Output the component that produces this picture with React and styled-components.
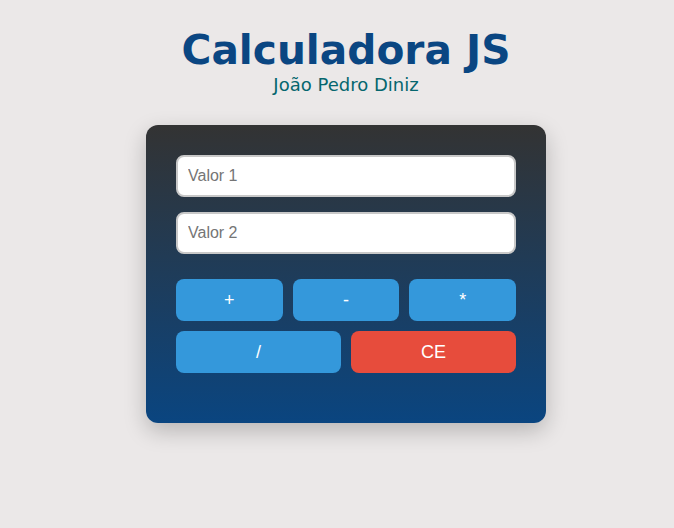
import styled, { createGlobalStyle } from 'styled-components';

const GlobalStyle = createGlobalStyle`
  html,
  body {
    margin: 0;
    min-height: 100%;
    background: #ebe8e8;
    font-family: 'DejaVu Sans', Verdana, sans-serif;
  }
`;

export default function App() {
  return (
    <Page>
      <GlobalStyle />
      <Header>
        <Title>Calculadora JS</Title>
        <Author>João Pedro Diniz</Author>
      </Header>
      <Card>
        <Field type='text' placeholder='Valor 1' />
        <Field type='text' placeholder='Valor 2' />
        <Operations>
          <OpButton>+</OpButton>
          <OpButton>-</OpButton>
          <OpButton>*</OpButton>
        </Operations>
        <Operations $cols={2}>
          <OpButton>/</OpButton>
          <OpButton $clear>CE</OpButton>
        </Operations>
        <Result />
      </Card>
    </Page>
  );
}

const Page = styled.div`
  display: flex;
  flex-direction: column;
  align-items: center;
  padding: 26px 0 80px 18px;
`;

const Header = styled.header`
  text-align: center;
  margin-bottom: 29px;
`;

const Title = styled.h1`
  margin: 0;
  font-size: 40.7px;
  line-height: 48px;
  font-weight: 700;
  color: #0a4682;
`;

const Author = styled.p`
  margin: 0;
  font-size: 18px;
  line-height: 22px;
  color: #05666e;
`;

const Card = styled.div`
  width: 400px;
  box-sizing: border-box;
  padding: 30px 30px 30px;
  border-radius: 12px;
  background: linear-gradient(to bottom, #333333, #0a4580);
  box-shadow: 0 8px 22px rgba(0, 0, 0, 0.22);
  display: flex;
  flex-direction: column;
`;

const Field = styled.input`
  height: 42px;
  box-sizing: border-box;
  margin-bottom: 15px;
  padding: 0 10px;
  border: 2px solid #c8c8c8;
  border-radius: 8px;
  background: #fff;
  font-family: 'Liberation Sans', Arial, sans-serif;
  font-size: 16px;
  color: #333;
  outline: none;

  &::placeholder {
    color: #757575;
  }
`;

const Operations = styled.div`
  display: grid;
  grid-template-columns: repeat(${(p) => p.$cols || 3}, 1fr);
  gap: 10px;
  margin-top: 10px;
`;

const OpButton = styled.button`
  height: 42px;
  border: none;
  border-radius: 8px;
  background: ${(p) => (p.$clear ? '#e74c3c' : '#3498db')};
  color: #fff;
  font-family: 'Liberation Sans', Arial, sans-serif;
  font-size: 18px;
  cursor: pointer;
`;

const Result = styled.div`
  height: 20px;
`;
